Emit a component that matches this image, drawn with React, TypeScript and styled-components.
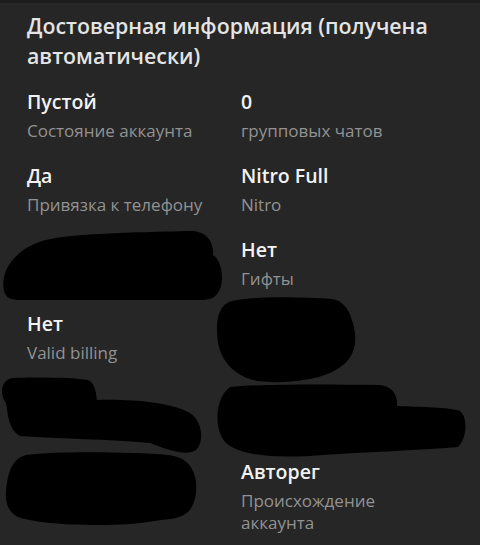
import React from "react";
import styled, { createGlobalStyle } from "styled-components";

const Global = createGlobalStyle`
  html, body { margin: 0; padding: 0; background: #262626; }
  body { font-family: "Open Sans", "Noto Sans", sans-serif; -webkit-font-smoothing: antialiased; }
`;

const Page = styled.div`
  position: relative;
  width: 480px;
  min-height: 545px;
  box-sizing: border-box;
  background: #262626;
  border-top: 3px solid #1c1c1c;
  padding: 8px 27px 0 27px;
  overflow: hidden;
`;

const Title = styled.h2`
  margin: 0;
  font-size: 21.3px;
  line-height: 30px;
  font-weight: 600;
  color: #e4e4e4;
  letter-spacing: 0;
`;

const Grid = styled.div`
  display: grid;
  grid-template-columns: 200px 205px;
  column-gap: 14px;
  margin-top: 18px;
`;

const Cell = styled.div`
  display: flex;
  flex-direction: column;
  gap: 5px;
  min-height: 53px;
  padding-bottom: 21px;
`;

const Value = styled.div`
  font-size: 19.5px;
  line-height: 26px;
  font-weight: 600;
  color: #f2f2f2;
`;

const Desc = styled.div`
  font-size: 17px;
  line-height: 22px;
  font-weight: 400;
  color: #929292;
`;

const Redactions = styled.svg`
  position: absolute;
  left: 0;
  top: 0;
  pointer-events: none;
`;

type Item = { value?: string; desc?: string };

const items: Item[] = [
  { value: "Пустой", desc: "Состояние аккаунта" },
  { value: "0", desc: "групповых чатов" },
  { value: "Да", desc: "Привязка к телефону" },
  { value: "Nitro Full", desc: "Nitro" },
  {},
  { value: "Нет", desc: "Гифты" },
  { value: "Нет", desc: "Valid billing" },
  {},
  {},
  {},
  {},
  { value: "Авторег", desc: "Происхождение аккаунта" },
];

export default function App() {
  return (
    <>
      <Global />
      <Page>
        <Title>Достоверная информация (получена автоматически)</Title>
        <Grid>
          {items.map((it, i) => (
            <Cell key={i}>
              {it.value && <Value>{it.value}</Value>}
              {it.desc && <Desc>{it.desc}</Desc>}
            </Cell>
          ))}
        </Grid>
        <Redactions width="480" height="545" viewBox="0 0 480 545">
          <g fill="#000">
            <path d="M4 288 C0 270 12 248 42 238 C64 232 100 230 188 228 C204 227 214 236 213 252 C223 258 225 282 217 291 C212 298 204 297 194 297 L22 297 C10 297 6 295 4 288 Z" />
            <path d="M232 298 C252 293 300 294 332 296 C346 298 352 312 355 330 C357 350 348 362 330 370 C312 378 280 381 258 378 C236 374 222 360 218 340 C215 318 218 302 232 298 Z" />
            <path d="M230 384 C260 381 320 381 380 382 C392 383 398 392 397 403 C420 404 450 404 460 408 C468 414 467 436 458 444 C430 447 360 449 310 453 C270 455 240 452 226 440 C214 428 214 396 230 384 Z" />
            <path d="M12 375 C30 374 75 374 88 377 C96 381 96 392 97 397 C130 396 170 399 190 410 C202 418 205 438 196 447 C188 452 175 450 150 440 C110 436 60 436 20 433 C8 426 8 410 6 400 C0 392 0 378 12 375 Z" />
            <path d="M26 452 C60 448 130 449 168 452 C190 454 198 470 196 490 C194 505 188 514 170 516 C150 518 140 522 100 522 C60 522 32 519 18 514 C6 508 4 495 7 480 C9 466 14 455 26 452 Z" />
          </g>
        </Redactions>
      </Page>
    </>
  );
}
